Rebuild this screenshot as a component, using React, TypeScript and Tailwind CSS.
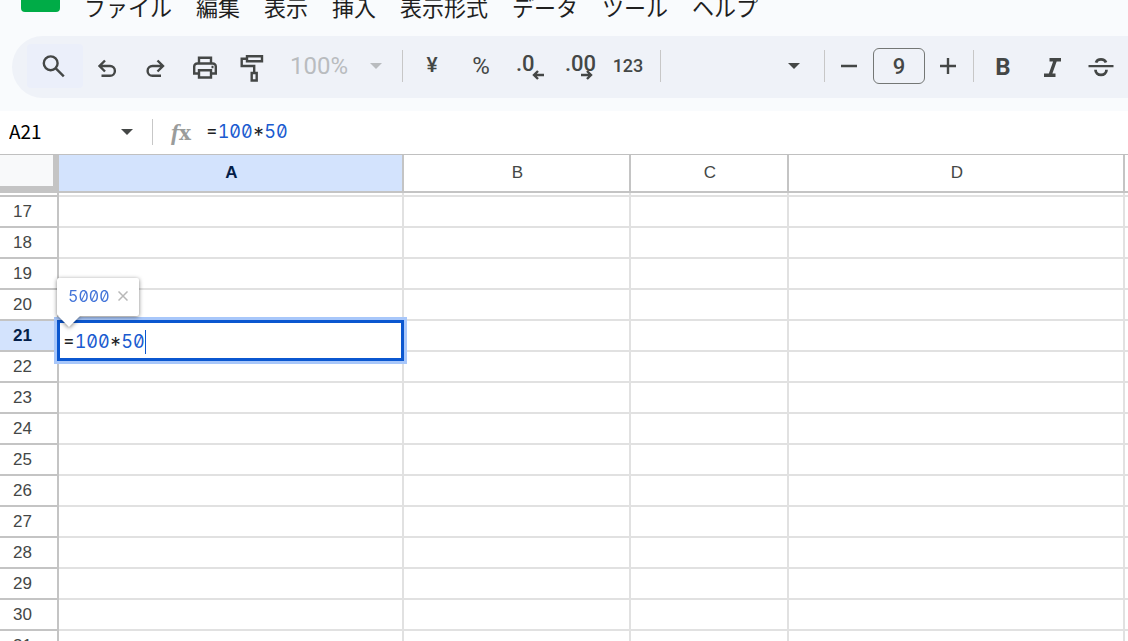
import type { ReactNode } from "react";

const menus = ["ファイル", "編集", "表示", "挿入", "表示形式", "データ", "ツール", "ヘルプ"];
const columns = ["A", "B", "C", "D", ""];
const rows = Array.from({ length: 15 }, (_, i) => i + 17);

interface ToolProps {
  label: string;
  children: ReactNode;
}

function Tool({ label, children }: ToolProps) {
  return (
    <button type="button" aria-label={label} className="flex h-11 w-12 shrink-0 items-center justify-center rounded">
      {children}
    </button>
  );
}

function Icon({ children, width = 2.4 }: { children: ReactNode; width?: number }) {
  return (
    <svg viewBox="0 0 32 32" className="size-8 shrink-0" fill="none" stroke="currentColor" strokeWidth={width}>
      {children}
    </svg>
  );
}

function Divider() {
  return <div className="h-8 w-px shrink-0 bg-[#c7c7c7]" />;
}

function Caret() {
  return (
    <svg viewBox="0 0 12 6" className="h-[6px] w-3 shrink-0" fill="currentColor">
      <path d="M0 0h12L6 6z" />
    </svg>
  );
}

function Formula() {
  return (
    <>
      <span className="text-[#202124]">=</span>
      <span className="text-[#1a5bd0]">100</span>
      <span className="text-[#202124]">*</span>
      <span className="text-[#1a5bd0]">50</span>
    </>
  );
}

function MenuBar() {
  return (
    <header className="flex h-9 shrink-0 items-start pl-[21px]">
      <div className="h-3 w-[39px] shrink-0 rounded-b bg-[#00ac47]" />
      <nav className="-mt-[10px] ml-6 flex gap-6 whitespace-nowrap text-[22px] leading-8 text-[#1f1f1f]">
        {menus.map((menu) => (
          <button type="button" key={menu}>
            {menu}
          </button>
        ))}
      </nav>
    </header>
  );
}

function Toolbar() {
  return (
    <div className="pb-[13px] pl-3">
      <div className="flex h-[62px] items-center overflow-hidden rounded-l-full bg-[#eff2f8] pb-0.5 pl-[15px] font-[Roboto,sans-serif] text-[#444746]">
        <button type="button" aria-label="検索" className="flex h-11 w-14 shrink-0 items-center justify-center rounded bg-[#ebeffa]">
          <Icon>
            <circle cx="11.7" cy="13.3" r="6.9" />
            <path d="M16.8 18.4l8 8" />
          </Icon>
        </button>
        <Tool label="元に戻す">
          <Icon>
            <path d="M14 10.5L8.500 16l5.500 5.500M8.500 16H19a4.900 4.900 0 0 1 0 9.800h-8.500" />
          </Icon>
        </Tool>
        <Tool label="やり直し">
          <Icon>
            <path d="M18.500 10.500L24 16l-5.500 5.500M24 16H13.500a4.900 4.900 0 0 0 0 9.800H22" />
          </Icon>
        </Tool>
        <Tool label="印刷">
          <Icon>
            <path d="M12 13.500V7.700h12v5.800M12 23.500H7.200v-7a3 3 0 0 1 3-3h15.600a3 3 0 0 1 3 3v7H24" />
            <path d="M12 20.200h12v7.300H12z" />
            <path d="M24.500 17h2" />
          </Icon>
        </Tool>
        <Tool label="書式を貼り付け">
          <Icon>
            <path d="M12 6.200h15v5H12zM12 8.700H6.700v7.300h12.500v6.500M16.700 23h5v7.500h-5z" />
          </Icon>
        </Tool>
        <label className="flex w-[127px] shrink-0 items-center pl-[15px] text-[#b9bcbf]">
          <select aria-label="ズーム" className="w-20 appearance-none text-2xl" defaultValue="100%">
            <option>100%</option>
          </select>
          <Caret />
        </label>
        <Divider />
        <div className="mx-[5px] flex gap-px text-[21px] font-medium">
          <Tool label="通貨">¥</Tool>
          <Tool label="パーセント">
            <span className="text-2xl font-normal">%</span>
          </Tool>
          <Tool label="小数点以下の桁数を減らす">
            <span className="relative h-7 w-7 text-left text-[22px] leading-6">
              .0
              <svg viewBox="0 0 12 10" className="absolute right-0 bottom-0 h-[10px] w-3" fill="none" stroke="currentColor" strokeWidth="2.400">
                <path d="M12 5H2M6 1L2 5l4 4" />
              </svg>
            </span>
          </Tool>
          <Tool label="小数点以下の桁数を増やす">
            <span className="relative h-7 w-7 text-left text-[22px] leading-6">
              .00
              <svg viewBox="0 0 12 10" className="absolute right-0 bottom-0 h-[10px] w-3" fill="none" stroke="currentColor" strokeWidth="2.400">
                <path d="M0 5h10M6 1l4 4-4 4" />
              </svg>
            </span>
          </Tool>
          <Tool label="表示形式の詳細">
            <span className="text-lg">123</span>
          </Tool>
        </div>
        <div className="ml-[3px]">
          <Divider />
        </div>
        <label className="flex w-[163px] shrink-0 items-center justify-end pr-6">
          <select aria-label="フォント" className="min-w-0 flex-1 appearance-none" />
          <Caret />
        </label>
        <Divider />
        <Tool label="フォントサイズを縮小">
          <Icon>
            <path d="M8 16h16" />
          </Icon>
        </Tool>
        <input
          aria-label="フォントサイズ"
          defaultValue="9"
          className="h-9 w-[52px] shrink-0 rounded-md border border-[#747775] text-center text-[22px] font-medium"
        />
        <Tool label="フォントサイズを拡大">
          <Icon>
            <path d="M7 16h16M15 8v16" />
          </Icon>
        </Tool>
        <Divider />
        <div className="ml-[5px] flex gap-px">
          <Tool label="太字">
            <span className="pt-0.5 text-2xl font-bold">B</span>
          </Tool>
          <Tool label="斜体">
            <Icon width={3.4}>
              <path d="M13.500 9.700h11.500M8 25.200h11.500M19.500 9.700l-5.500 15.500" />
            </Icon>
          </Tool>
          <Tool label="取り消し線">
            <Icon width={2.8}>
              <path d="M3.500 16.200h25" strokeWidth="2.200" />
              <path d="M11 12.700c.8-2.600 2.600-3.300 5-3.300s4.200 1 5 3M10.500 19.700c0 3 2.300 5.200 5.500 5.200s5.500-2.200 5.500-5.200" />
            </Icon>
          </Tool>
        </div>
      </div>
    </div>
  );
}

function FormulaBar() {
  return (
    <div className="flex h-11 shrink-0 items-center border-b border-[#c0c0c0] bg-white pb-0.5 pl-[9px]">
      <input aria-label="名前ボックス" defaultValue="A21" className="w-28 text-[19px] text-black" />
      <span className="text-[#444746]">
        <Caret />
      </span>
      <div className="ml-[19px] h-[26px] w-px bg-[#c7c7c7]" />
      <span className="ml-[18px] w-[35px] font-['DejaVu_Serif',serif] text-xl font-bold text-[#9a9c9b]">
        <i className="font-['Liberation_Serif',serif] text-2xl">f</i>x
      </span>
      <div role="textbox" aria-label="数式" className="flex-1 font-[Inter,sans-serif] text-lg slashed-zero tabular-nums">
        <Formula />
      </div>
    </div>
  );
}

function CellEditor() {
  return (
    <div className="absolute -top-px -right-[2px] -left-[2px] z-10 flex h-[41px] items-center border-3 border-[#0b57d0] bg-white pt-0.5 pl-[3px] ring-3 ring-[#a8c7fa]">
      <div role="textbox" aria-label="A21" className="border-r border-[#0b57d0] font-[Inter,sans-serif] text-lg leading-6 slashed-zero tabular-nums">
        <Formula />
      </div>
      <div className="absolute -left-[3px] bottom-[42px] flex h-[38px] w-[82px] items-center gap-2 rounded-xs bg-white pb-0.5 pl-[11px] font-[Inter,sans-serif] text-base text-[#4374d9] slashed-zero tabular-nums drop-shadow-[0_1px_2px_rgba(0,0,0,0.5)]">
        5000
        <button type="button" aria-label="閉じる">
          <svg viewBox="0 0 10 10" className="size-[10px]" stroke="#b8b8b8" strokeWidth="1.500">
            <path d="M.5.5l9 9M9.500.5l-9 9" />
          </svg>
        </button>
        <svg viewBox="0 0 22 11" className="absolute top-full left-px h-[11px] w-[22px]" fill="white">
          <path d="M0 0h22L11 11z" />
        </svg>
      </div>
    </div>
  );
}

function Sheet() {
  return (
    <table className="w-full table-fixed border-separate border-spacing-0 bg-white font-['Liberation_Sans',Arial,sans-serif] text-[17px] text-[#444746]">
      <colgroup>
        <col className="w-[59px]" />
        <col className="w-[345px]" />
        <col className="w-[227px]" />
        <col className="w-[158px]" />
        <col className="w-[336px]" />
        <col />
      </colgroup>
      <thead>
        <tr className="h-[38px]">
          <th className="border-r-2 border-b-2 border-[#c4c4c4] p-0">
            <div className="h-9 border-r-4 border-b-5 border-[#c4c4c4] bg-[#f8f9fa]" />
          </th>
          {columns.map((name) => (
            <th
              key={name}
              scope="col"
              className={`border-b-2 border-[#c4c4c4] p-0 ${name ? "border-r-2 pl-0.5" : ""} ${
                name === "A" ? "bg-[#d3e3fd] font-bold text-[#041e49]" : "font-normal"
              }`}
            >
              {name}
            </th>
          ))}
        </tr>
      </thead>
      <tbody>
        <tr className="h-1">
          <td className="border-r-2 border-b-2 border-[#c4c4c4] p-0" />
          {columns.map((name) => (
            <td key={name} className={`border-b-2 border-[#e1e1e1] p-0 ${name ? "border-r-2" : ""}`} />
          ))}
        </tr>
        {rows.map((row) => (
          <tr key={row} className="h-[31px]">
            <th
              scope="row"
              className={`border-r-2 border-b-2 border-[#c4c4c4] p-0 pr-3 leading-6 ${
                row === 21 ? "bg-[#d3e3fd] font-bold text-[#041e49]" : "font-normal"
              }`}
            >
              {row}
            </th>
            {columns.map((name) => (
              <td key={name} className={`relative border-b-2 border-[#e1e1e1] p-0 ${name ? "border-r-2" : ""}`}>
                {row === 21 && name === "A" && <CellEditor />}
              </td>
            ))}
          </tr>
        ))}
      </tbody>
    </table>
  );
}

export default function App() {
  return (
    <div className="flex h-screen flex-col overflow-hidden bg-[#f9fbfd] font-['Noto_Sans_CJK_JP',sans-serif]">
      <MenuBar />
      <Toolbar />
      <FormulaBar />
      <main className="min-h-0 flex-1 overflow-hidden bg-white">
        <Sheet />
      </main>
    </div>
  );
}
